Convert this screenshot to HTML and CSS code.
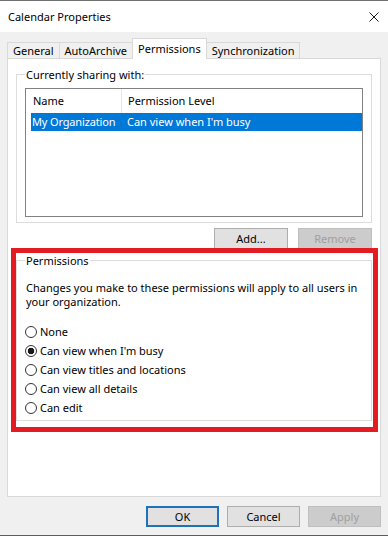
FILE: index.html
```html
<!DOCTYPE html>
<html lang="en">
<head>
<meta charset="UTF-8">
<meta name="viewport" content="width=device-width, initial-scale=1.0">
<title>Calendar Properties</title>
<link rel="stylesheet" href="styles.css">
</head>
<body>

<div class="dialog">
    <div class="titlebar">
        <span class="title">Calendar Properties</span>
        <svg class="close" viewBox="0 0 10 10" width="10" height="10">
            <path d="M0.5 0.5 L9.5 9.5 M9.5 0.5 L0.5 9.5" stroke="#1a1a1a" stroke-width="1" fill="none"/>
        </svg>
    </div>

    <div class="content">
        <div class="tabs">
            <div class="tab">General</div>
            <div class="tab">AutoArchive</div>
            <div class="tab active">Permissions</div>
            <div class="tab">Synchronization</div>
        </div>

        <div class="panel">
            <fieldset class="group sharing">
                <legend>Currently sharing with:</legend>
                <div class="listbox">
                    <div class="list-head">
                        <span class="col-name">Name</span>
                        <span class="col-level">Permission Level</span>
                    </div>
                    <div class="list-row selected">
                        <span class="col-name">My Organization</span>
                        <span class="col-level">Can view when I'm busy</span>
                    </div>
                </div>
            </fieldset>

            <div class="list-actions">
                <button class="btn small">Add...</button>
                <button class="btn small" disabled>Remove</button>
            </div>

            <fieldset class="group perms">
                <legend>Permissions</legend>
                <p>Changes you make to these permissions will apply to all users in your organization.</p>
                <label class="radio"><input type="radio" name="level"> None</label>
                <label class="radio"><input type="radio" name="level" checked> Can view when I'm busy</label>
                <label class="radio"><input type="radio" name="level"> Can view titles and locations</label>
                <label class="radio"><input type="radio" name="level"> Can view all details</label>
                <label class="radio"><input type="radio" name="level"> Can edit</label>
            </fieldset>
        </div>

        <div class="footer">
            <button class="btn default">OK</button>
            <button class="btn">Cancel</button>
            <button class="btn" disabled>Apply</button>
        </div>
    </div>

    <!-- annotation box drawn over the permissions group -->
    <div class="highlight"></div>
</div>

</body>
</html>
```

FILE: styles.css
```css
body {
    margin: 0;
    font-family: "Noto Sans", "Open Sans", sans-serif;
    font-size: 11px;
    color: #000;
    background: #fff;
}

.dialog {
    position: relative;
    width: 388px;
    height: 536px;
    box-sizing: border-box;
    border-top: 1px solid #707070;
    border-bottom: 1px solid #5c5c5c;
    background: #f0f0f0;
    display: flex;
    flex-direction: column;
}

.titlebar {
    height: 31px;
    background: #fff;
    display: flex;
    align-items: center;
    justify-content: space-between;
    padding: 0 9px 0 8px;
}

.close {
    display: block;
}

.content {
    flex: 1;
    display: flex;
    flex-direction: column;
    padding: 7px 7px 0;
}

/* Tabs */
.tabs {
    display: flex;
    align-items: flex-end;
    height: 20px;
    margin-bottom: -1px;
}

.tab {
    height: 17px;
    box-sizing: border-box;
    line-height: 15px;
    padding: 0 5px;
    border: 1px solid #d9d9d9;
    border-bottom: none;
    background: #f0f0f0;
}

.tab + .tab {
    margin-left: -1px;
}

.tab.active {
    position: relative;
    z-index: 1;
    height: 21px;
    padding-top: 2px;
    background: #fff;
}

.panel {
    flex: 1;
    background: #fff;
    border: 1px solid #d9d9d9;
    padding: 0 8px;
}

/* Group boxes */
.group {
    margin: 0;
    min-width: 0;
    border: 1px solid #dcdcdc;
    padding: 6px 8px 5px;
}

.group legend {
    padding: 0 1px;
    line-height: 15px;
}

.sharing {
    margin-top: 8px;
}

.listbox {
    height: 129px;
    box-sizing: border-box;
    border: 1px solid #828282;
}

.list-head,
.list-row {
    display: flex;
    margin-left: 5px;
}

.list-head {
    height: 24px;
    line-height: 24px;
}

.list-head .col-name {
    width: 88px;
    padding-left: 2px;
    border-right: 1px solid #e5e5e5;
}

.list-head .col-level {
    padding-left: 6px;
}

.list-row {
    height: 18px;
    line-height: 18px;
}

.list-row .col-name {
    width: 95px;
    padding-left: 1px;
    letter-spacing: -0.15px;
}

.list-row.selected {
    background: #0078d7;
    color: #fff;
}

.list-actions {
    display: flex;
    justify-content: flex-end;
    gap: 10px;
    margin-top: 5px;
}

.perms {
    margin-top: 4px;
    padding-bottom: 3px;
}

.perms p {
    margin: 7px 0 13px;
    padding-left: 1px;
    line-height: 14px;
}

.radio {
    display: flex;
    align-items: center;
    height: 19px;
}

.radio input {
    appearance: none;
    -webkit-appearance: none;
    width: 12px;
    height: 12px;
    margin: 0 3px 0 0;
    border: 1px solid #333;
    border-radius: 50%;
    background: #fff;
}

.radio input:checked {
    background: radial-gradient(circle, #1a1a1a 0 3px, #fff 3.6px);
}

/* Buttons */
.btn {
    width: 73px;
    height: 21px;
    padding: 0;
    font-family: inherit;
    font-size: 11px;
    color: #000;
    background: #e1e1e1;
    border: 1px solid #adadad;
}

.btn.small {
    width: 74px;
}

.btn:disabled {
    color: #a0a0a0;
    background: #cccccc;
    border-color: #bfbfbf;
}

.btn.default {
    border: 2px solid #1f71b8;
}

.footer {
    display: flex;
    justify-content: flex-end;
    gap: 8px;
    padding: 9px 0 8px;
}

.highlight {
    position: absolute;
    left: 11px;
    top: 247px;
    width: 367px;
    height: 184px;
    box-sizing: border-box;
    border: 5px solid #e31b23;
}
```
